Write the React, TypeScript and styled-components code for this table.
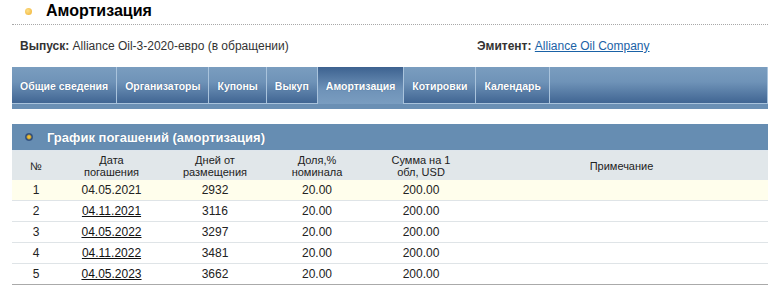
import React from 'react';
import styled, { createGlobalStyle } from 'styled-components';

const GlobalStyle = createGlobalStyle`
  body {
    margin: 0;
    background: #fff;
    font-family: 'Liberation Sans', Arial, sans-serif;
    color: #222;
  }
`;

const tabs = ['Общие сведения', 'Организаторы', 'Купоны', 'Выкуп', 'Амортизация', 'Котировки', 'Календарь'];

const rows = [
  { n: 1, date: '04.05.2021', days: 2932, share: '20.00', sum: '200.00', link: false },
  { n: 2, date: '04.11.2021', days: 3116, share: '20.00', sum: '200.00', link: true },
  { n: 3, date: '04.05.2022', days: 3297, share: '20.00', sum: '200.00', link: true },
  { n: 4, date: '04.11.2022', days: 3481, share: '20.00', sum: '200.00', link: true },
  { n: 5, date: '04.05.2023', days: 3662, share: '20.00', sum: '200.00', link: true },
];

const columns = [48, 103, 104, 100, 108, 293];

export default function App() {
  return (
    <>
      <GlobalStyle />
      <Page>
        <PageTitle>
          <OrangeDot />
          <h1>Амортизация</h1>
        </PageTitle>
        <InfoLine>
          <InfoItem $width={457}>
            <b>Выпуск:</b> Alliance Oil-3-2020-евро (в обращении)
          </InfoItem>
          <InfoItem>
            <b>Эмитент:</b> <IssuerLink href="#">Alliance Oil Company</IssuerLink>
          </InfoItem>
        </InfoLine>
        <TabBar>
          {tabs.map(tab => (
            <Tab key={tab} $active={tab === 'Амортизация'}>
              {tab}
            </Tab>
          ))}
          <TabFiller />
        </TabBar>
        <SectionHeader>
          <NavyDot />
          График погашений (амортизация)
        </SectionHeader>
        <Table>
          <colgroup>
            {columns.map((w, i) => (
              <col key={i} style={{ width: w }} />
            ))}
          </colgroup>
          <thead>
            <tr>
              <Th>№</Th>
              <Th>Дата<br />погашения</Th>
              <Th>Дней от<br />размещения</Th>
              <Th>Доля,%<br />номинала</Th>
              <Th>Сумма на 1<br />обл, USD</Th>
              <Th>Примечание</Th>
            </tr>
          </thead>
          <tbody>
            {rows.map((r, i) => (
              <Row key={r.n} $highlight={i === 0} $last={i === rows.length - 1}>
                <td>{r.n}</td>
                <td>{r.link ? <DateLink href="#">{r.date}</DateLink> : r.date}</td>
                <td>{r.days}</td>
                <td>{r.share}</td>
                <td>{r.sum}</td>
                <td></td>
              </Row>
            ))}
          </tbody>
        </Table>
      </Page>
    </>
  );
}

const Page = styled.div`
  width: 756px;
  padding: 0 8px 0 12px;
`;

const PageTitle = styled.div`
  display: flex;
  align-items: center;
  height: 24px;
  border-bottom: 1px dotted #a8a8a8;
  padding-left: 13px;

  h1 {
    margin: 0 0 0 14px;
    font-size: 16px;
    font-weight: bold;
    color: #000;
    line-height: 22px;
    position: relative;
    top: -1px;
  }
`;

const OrangeDot = styled.span`
  width: 7px;
  height: 7px;
  border-radius: 50%;
  background: radial-gradient(circle at 40% 40%, #fde08a, #f0b030);
  position: relative;
  top: -1px;
`;

const InfoLine = styled.div`
  display: flex;
  padding: 14px 0 0 8px;
  height: 28px;
  font-size: 12px;
  color: #333;
`;

const InfoItem = styled.div<{ $width?: number }>`
  width: ${({ $width }) => ($width ? `${$width}px` : 'auto')};
  line-height: 14px;

  b {
    color: #333;
  }
`;

const IssuerLink = styled.a`
  color: #1a62a6;
  text-decoration: underline;
`;

const TabBar = styled.div`
  display: flex;
  height: 37px;
  border-bottom: 5px solid #6a8fb4;
`;

const Tab = styled.div<{ $active: boolean }>`
  display: flex;
  align-items: center;
  padding: 0 8px;
  font-size: 10.5px;
  font-weight: bold;
  color: #fff;
  text-shadow: 0 0 1px #3a5a80;
  border-right: 1px solid #a9c3dc;
  background: ${({ $active }) =>
    $active
      ? 'linear-gradient(#3d6290, #6e92b8 60%, #7a9dc0)'
      : 'linear-gradient(#7a9dbf, #6f93b8 40%, #3e6391)'};
  box-shadow: ${({ $active }) => ($active ? 'none' : 'inset 0 -1px 0 #a9c3dc')};
`;

const TabFiller = styled.div`
  flex: 1;
  background: linear-gradient(#7a9dbf, #6f93b8 40%, #3e6391);
  box-shadow: inset 0 -1px 0 #a9c3dc, inset -1px 0 0 #a9c3dc;
`;

const SectionHeader = styled.div`
  margin-top: 15px;
  height: 26px;
  display: flex;
  align-items: center;
  padding-left: 13px;
  background: #668db2;
  color: #fff;
  font-size: 13px;
  font-weight: bold;
  text-shadow: 0 0 1px #4a6a8c;
  border-bottom: 1px solid #dfe6ec;
`;

const NavyDot = styled.span`
  width: 8px;
  height: 8px;
  border-radius: 50%;
  margin-right: 14px;
  background: radial-gradient(circle, #f6cf40 0, #e0b030 1.5px, #2c4a78 3px, #3b5d8c 4px);
`;

const Table = styled.table`
  width: 756px;
  border-collapse: collapse;
  table-layout: fixed;
  font-size: 12px;

  td {
    text-align: center;
    padding: 0;
    height: 20px;
    line-height: 14px;
    color: #222;
  }
`;

const Th = styled.th`
  background: #e1e7ea;
  font-weight: normal;
  font-size: 11px;
  line-height: 12px;
  color: #222;
  height: 29px;
  padding: 0;
  text-align: center;
`;

const Row = styled.tr<{ $highlight: boolean; $last: boolean }>`
  background: ${({ $highlight }) => ($highlight ? '#fffeec' : '#fff')};
  border-bottom: 1px solid ${({ $last }) => ($last ? '#aaaaaa' : '#dfe4e7')};
`;

const DateLink = styled.a`
  color: #111;
  text-decoration: underline;
`;
